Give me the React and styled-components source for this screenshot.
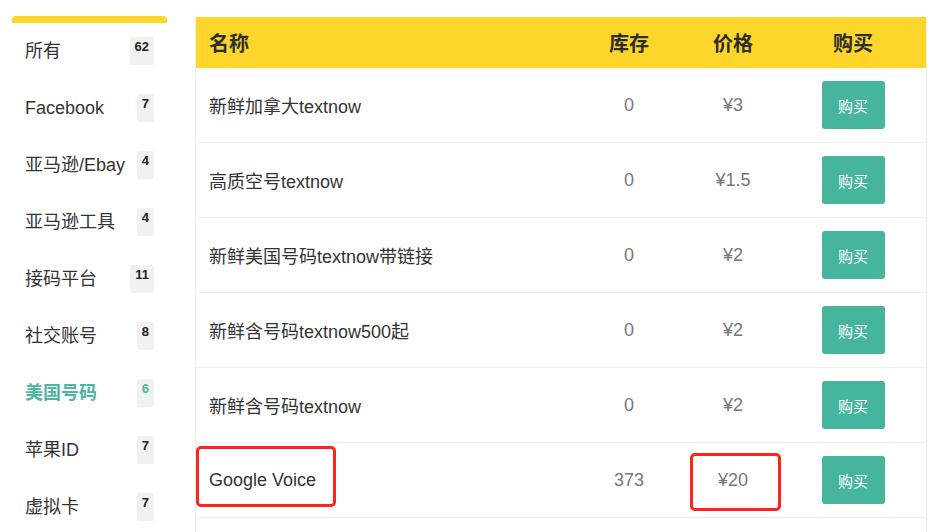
import React from 'react'
import styled, { createGlobalStyle, css } from 'styled-components'

const GlobalStyle = createGlobalStyle`
  body {
    margin: 0;
    background: #fff;
    font-family: "Liberation Sans", "Noto Sans CJK SC", sans-serif;
    color: #333;
  }
`

const Page = styled.div`
  display: flex;
  align-items: flex-start;
  padding: 16px 0 0 12px;
  gap: 28px;
  height: 516px;
  overflow: hidden;
`

const Sidebar = styled.ul`
  list-style: none;
  margin: 0;
  padding: 0;
  width: 155px;
  border-top: 7px solid #fdd52b;
  border-radius: 4px 4px 0 0;
`

const SideItem = styled.li`
  display: flex;
  align-items: center;
  justify-content: space-between;
  height: 56.9px;
  line-height: 20px;
  padding: 0 13px;
  font-size: 18px;
  color: ${p => (p.$active ? '#4cb59f' : '#333')};
  font-weight: ${p => (p.$active ? 'bold' : 'normal')};
`

const Badge = styled.span`
  box-sizing: border-box;
  min-width: 17px;
  height: 28px;
  padding: 3px 5px 0;
  line-height: 14px;
  background: #f1f1f1;
  border-radius: 2px;
  font-size: 13px;
  font-weight: bold;
  text-align: center;
  color: ${p => (p.$active ? '#4cb59f' : '#222')};
`

const Table = styled.div`
  width: 730px;
  margin-top: 1px;
  border-left: 1px solid #eee;
  border-right: 1px solid #eee;
`

const cols = css`
  display: grid;
  grid-template-columns: 377px 112px 96px 144px;
  align-items: center;
`

const HeadRow = styled.div`
  ${cols}
  height: 51px;
  background: #fdd52b;
`

const Row = styled.div`
  ${cols}
  height: 74px;
  border-bottom: 1px solid #eee;
`

const Cell = styled.div`
  position: relative;
  height: 100%;
  display: flex;
  align-items: center;
  justify-content: ${p => (p.$left ? 'flex-start' : 'center')};
  padding-left: ${p => (p.$left ? '13px' : '0')};
  font-size: 18px;
  color: ${p => (p.$muted ? '#777' : '#333')};
`

const HeadCell = styled(Cell)`
  font-size: 20px;
  font-weight: bold;
  color: #2d2d2d;
`

const BuyButton = styled.button`
  width: 63px;
  height: 48px;
  border: none;
  border-radius: 3px;
  background: #45b59e;
  color: #fff;
  font-family: inherit;
  font-size: 15px;
  cursor: pointer;
`

const Mark = styled.span`
  position: absolute;
  box-sizing: border-box;
  border: 3px solid #ff2418;
  border-radius: 5px;
  pointer-events: none;
  ${p => p.$pos}
`

const categories = [
  { name: '所有', count: 62 },
  { name: 'Facebook', count: 7 },
  { name: '亚马逊/Ebay', count: 4 },
  { name: '亚马逊工具', count: 4 },
  { name: '接码平台', count: 11 },
  { name: '社交账号', count: 8 },
  { name: '美国号码', count: 6, active: true },
  { name: '苹果ID', count: 7 },
  { name: '虚拟卡', count: 7 },
]

const products = [
  { name: '新鲜加拿大textnow', stock: 0, price: '¥3' },
  { name: '高质空号textnow', stock: 0, price: '¥1.5' },
  { name: '新鲜美国号码textnow带链接', stock: 0, price: '¥2' },
  { name: '新鲜含号码textnow500起', stock: 0, price: '¥2' },
  { name: '新鲜含号码textnow', stock: 0, price: '¥2' },
  { name: 'Google Voice', stock: 373, price: '¥20', marked: true },
  { name: '', stock: '', price: '' },
]

export default function App () {
  return (
    <>
      <GlobalStyle />
      <Page>
        <Sidebar>
          {categories.map(c => (
            <SideItem key={c.name} $active={c.active}>
              <span>{c.name}</span>
              <Badge $active={c.active}>{c.count}</Badge>
            </SideItem>
          ))}
        </Sidebar>
        <Table>
          <HeadRow>
            <HeadCell $left>名称</HeadCell>
            <HeadCell>库存</HeadCell>
            <HeadCell>价格</HeadCell>
            <HeadCell>购买</HeadCell>
          </HeadRow>
          {products.map((p, i) => (
            <Row key={i}>
              <Cell $left>
                {p.name}
                {p.marked && <Mark $pos='left: 0; top: 3px; width: 140px; height: 61px;' />}
              </Cell>
              <Cell $muted>{p.stock}</Cell>
              <Cell $muted>
                {p.price}
                {p.marked && <Mark $pos='left: 5px; top: 10px; width: 91px; height: 58px;' />}
              </Cell>
              <Cell>{p.name && <BuyButton>购买</BuyButton>}</Cell>
            </Row>
          ))}
        </Table>
      </Page>
    </>
  )
}
